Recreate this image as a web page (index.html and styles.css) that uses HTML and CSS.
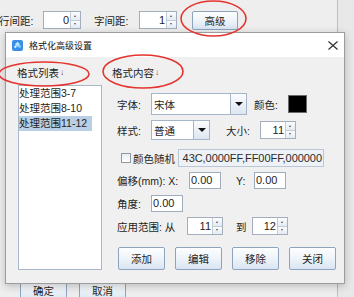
FILE: index.html
```html
<!DOCTYPE html>
<html lang="zh-CN">
<head>
    <meta charset="UTF-8">
    <title>格式化高级设置</title>
    <link rel="stylesheet" href="styles.css">
</head>
<body>
    <div class="main-window">
        <div class="toolbar">
            <span class="tb-label">行间距:</span>
            <div class="spinner tb-spinner">
                <span class="value">0</span>
                <div class="spin-btns"><span class="up"></span><span class="down"></span></div>
            </div>
            <span class="tb-label second">字间距:</span>
            <div class="spinner tb-spinner">
                <span class="value">1</span>
                <div class="spin-btns"><span class="up"></span><span class="down"></span></div>
            </div>
            <button class="btn btn-advanced">高级</button>
        </div>
        <div class="footer">
            <button class="btn btn-footer">确定</button>
            <button class="btn btn-footer">取消</button>
        </div>
    </div>

    <div class="dialog">
        <div class="titlebar">
            <svg class="app-icon" width="11" height="11" viewBox="0 0 11 11">
                <rect x="0" y="0" width="11" height="11" rx="2" fill="#3a8ee6"/>
                <path d="M5.5 1.8 L8 4.3 L5.5 6.8 L3 4.3 Z" fill="#bfe6ff"/>
                <path d="M7.6 4.6 L9.4 6.4 L7.6 8.2 L5.8 6.4 Z" fill="#7fd0ff"/>
                <path d="M3.4 5.2 L4.9 6.7 L3.4 8.2 L1.9 6.7 Z" fill="#e6f6ff"/>
            </svg>
            <span class="title">格式化高级设置</span>
            <svg class="close" width="10" height="9" viewBox="0 0 10 9">
                <path d="M0.5 0.5 L9.5 8.5 M9.5 0.5 L0.5 8.5" stroke="#2b2b2b" stroke-width="1.1"/>
            </svg>
        </div>

        <div class="dialog-body">
            <div class="list-col">
                <div class="section-label list-label">格式列表<span class="arrow">↓</span></div>
                <ul class="format-list">
                    <li>处理范围3-7</li>
                    <li>处理范围8-10</li>
                    <li class="selected">处理范围11-12</li>
                </ul>
            </div>

            <div class="content-col">
                <div class="section-label">格式内容<span class="arrow">↓</span></div>

                <div class="row row-font">
                    <span class="field-label">字体:</span>
                    <div class="combo combo-font">
                        <span class="combo-text">宋体</span>
                        <span class="combo-arrow"></span>
                    </div>
                    <span class="field-label color-label">颜色:</span>
                    <span class="swatch"></span>
                </div>

                <div class="row row-style">
                    <span class="field-label">样式:</span>
                    <div class="combo combo-style">
                        <span class="combo-text">普通</span>
                        <span class="combo-arrow"></span>
                    </div>
                    <span class="field-label size-label">大小:</span>
                    <div class="spinner size-spinner">
                        <span class="value">11</span>
                        <div class="spin-btns"><span class="up"></span><span class="down"></span></div>
                    </div>
                </div>

                <div class="row row-random">
                    <span class="checkbox"></span>
                    <span class="check-text">颜色随机</span>
                    <div class="color-list">43C,0000FF,FF00FF,000000</div>
                </div>

                <div class="row row-offset">
                    <span class="offset-label">偏移(mm): X:</span>
                    <span class="text-field">0.00</span>
                    <span class="y-label">Y:</span>
                    <span class="text-field">0.00</span>
                </div>

                <div class="row row-angle">
                    <span class="field-label">角度:</span>
                    <span class="text-field">0.00</span>
                </div>

                <div class="row row-range">
                    <span class="range-label">应用范围: 从</span>
                    <div class="spinner range-spinner">
                        <span class="value">11</span>
                        <div class="spin-btns"><span class="up"></span><span class="down"></span></div>
                    </div>
                    <span class="to-label">到</span>
                    <div class="spinner range-spinner">
                        <span class="value">12</span>
                        <div class="spin-btns"><span class="up"></span><span class="down"></span></div>
                    </div>
                </div>

                <div class="row actions">
                    <button class="btn btn-action">添加</button>
                    <button class="btn btn-action">编辑</button>
                    <button class="btn btn-action">移除</button>
                    <button class="btn btn-action">关闭</button>
                </div>
            </div>
        </div>
    </div>

    <!-- red hand-drawn marks on the screenshot -->
    <svg class="marks" width="354" height="297" viewBox="0 0 354 297">
        <ellipse cx="213.5" cy="18.5" rx="32.5" ry="17.5"/>
        <ellipse cx="44" cy="74" rx="45" ry="12"/>
        <ellipse cx="143" cy="71.5" rx="40" ry="16.5"/>
    </svg>
</body>
</html>
```

FILE: styles.css
```css
* {
    box-sizing: border-box;
}

body {
    margin: 0;
    width: 354px;
    height: 297px;
    overflow: hidden;
    position: relative;
    background: #e8e8e8;
    font-family: "Liberation Sans", "Noto Sans CJK SC", sans-serif;
    font-size: 10.5px;
    color: #1e1e1e;
}

/* background window */
.main-window {
    width: 338px;
    height: 297px;
    background: #eeeeee;
    border-right: 1px solid #a9c1dc;
    display: flex;
    flex-direction: column;
    overflow: hidden;
}

.toolbar {
    height: 40px;
    display: flex;
    align-items: center;
    margin-left: -1px;
}

.tb-label {
    width: 44px;
}

.tb-label.second {
    margin-left: 13px;
    width: 45px;
}

.tb-spinner {
    width: 38px;
    height: 18px;
}

.btn-advanced {
    margin-left: 15px;
    width: 46px;
    height: 19px;
}

.footer {
    margin-top: auto;
    height: 19px;
    display: flex;
    align-items: flex-start;
    padding-left: 20px;
    gap: 12px;
}

.btn-footer {
    width: 47px;
    height: 24px;
    flex-shrink: 0;
}

/* shared controls */
.btn {
    font: inherit;
    color: #1e1e1e;
    padding: 0;
    border: 1px solid #8ea4bd;
    border-radius: 2px;
    background: linear-gradient(#fdfeff 0%, #f0f5fa 45%, #d9e5f2 100%);
}

.spinner {
    display: flex;
    background: #fff;
    border: 1px solid #a3afbc;
}

.spinner .value {
    flex: 1;
    text-align: right;
    font-size: 11px;
    line-height: 16px;
    padding-right: 1px;
}

.spin-btns {
    width: 10px;
    display: flex;
    flex-direction: column;
    border-left: 1px solid #c3cdd8;
}

.spin-btns span {
    flex: 1;
    position: relative;
    background: linear-gradient(#fbfcfe, #e4ebf3);
}

.spin-btns .up {
    border-bottom: 1px solid #c3cdd8;
}

.spin-btns span::after {
    content: "";
    position: absolute;
    left: 3px;
    top: 50%;
    margin-top: -1px;
    border-left: 1.5px solid transparent;
    border-right: 1.5px solid transparent;
}

.spin-btns .up::after {
    border-bottom: 2px solid #555;
}

.spin-btns .down::after {
    border-top: 2px solid #555;
}

/* dialog window */
.dialog {
    position: absolute;
    left: 5px;
    top: 32px;
    width: 340px;
    height: 252px;
    border: 1px solid #9c9c9c;
    background: #f0f0f0;
    box-shadow: 0 2px 8px rgba(0, 0, 0, 0.22);
    display: flex;
    flex-direction: column;
}

.titlebar {
    height: 24px;
    background: #fff;
    display: flex;
    align-items: center;
    padding-left: 6px;
}

.title {
    margin-left: 6px;
    font-size: 9px;
    color: #111;
}

.close {
    margin-left: auto;
    margin-right: 6px;
}

.dialog-body {
    flex: 1;
    display: flex;
    padding-left: 12px;
}

.section-label {
    height: 28px;
    padding-top: 3px;
    display: flex;
    align-items: center;
}

.list-label {
    margin-left: -1px;
}

.arrow {
    font-size: 8px;
    color: #7a3040;
    margin-left: 1px;
}

.list-col {
    width: 84px;
}

.format-list {
    list-style: none;
    margin: 0;
    padding: 0;
    height: 185px;
    background: #fff;
    border: 1px solid #a8b8ca;
}

.format-list li {
    width: fit-content;
    line-height: 15px;
    padding-right: 5px;
}

.format-list li.selected {
    background: #b8cfe5;
}

.content-col {
    margin-left: 10px;
    flex: 1;
}

.row {
    display: flex;
    align-items: center;
    padding-left: 5px;
}

.field-label {
    width: 34px;
}

.combo {
    display: flex;
    background: #fff;
    border: 1px solid #a5b6c9;
}

.combo-text {
    flex: 1;
    padding-left: 2px;
    display: flex;
    align-items: center;
}

.combo-arrow {
    width: 16px;
    border-left: 1px solid #a5b6c9;
    background: linear-gradient(#fbfcfe, #dce6f1);
    display: flex;
    align-items: center;
    justify-content: center;
}

.combo-arrow::after {
    content: "";
    border-left: 4px solid transparent;
    border-right: 4px solid transparent;
    border-top: 4px solid #111;
}

.row-font {
    margin-top: 8px;
    height: 22px;
}

.combo-font {
    width: 96px;
    height: 22px;
}

.color-label {
    margin-left: 7px;
}

.swatch {
    width: 19px;
    height: 18px;
    background: #000;
    border: 1px solid #6b6b6b;
}

.row-style {
    margin-top: 5px;
    height: 20px;
}

.combo-style {
    width: 59px;
    height: 20px;
}

.size-label {
    margin-left: 16px;
}

.size-spinner {
    width: 36px;
    height: 18px;
}

.row-random {
    margin-top: 9px;
    height: 18px;
}

.checkbox {
    width: 10px;
    height: 10px;
    margin-left: 4px;
    border: 1px solid #8f9aa6;
    background: linear-gradient(#e9eef3, #ffffff);
}

.check-text {
    width: 47px;
    padding-left: 2px;
}

.color-list {
    width: 146px;
    height: 18px;
    display: flex;
    justify-content: flex-end;
    align-items: center;
    white-space: nowrap;
    background: #eef2f6;
    border: 1px solid #b9c7d6;
    font-size: 11px;
    letter-spacing: -0.05px;
    color: #2a2a2a;
    padding-right: 1px;
}

.row-offset {
    margin-top: 5px;
    height: 17px;
}

.offset-label {
    width: 72px;
}

.text-field {
    width: 32px;
    height: 17px;
    background: #fff;
    border: 1px solid #9eacbb;
    font-size: 11px;
    line-height: 15px;
    padding-left: 1px;
}

.y-label {
    margin-left: 15px;
    width: 18px;
}

.row-angle {
    margin-top: 6px;
    height: 17px;
}

.row-range {
    margin-top: 5px;
    height: 18px;
}

.range-label {
    width: 70px;
}

.range-spinner {
    width: 36px;
    height: 18px;
}

.to-label {
    margin-left: 13px;
    width: 16px;
}

.actions {
    margin-top: 12px;
    gap: 10px;
    padding-left: 6px;
}

.btn-action {
    width: 47px;
    height: 23px;
}

.marks {
    position: absolute;
    left: 0;
    top: 0;
    pointer-events: none;
}

.marks ellipse {
    fill: none;
    stroke: #e5342f;
    stroke-width: 1.6;
}
```
